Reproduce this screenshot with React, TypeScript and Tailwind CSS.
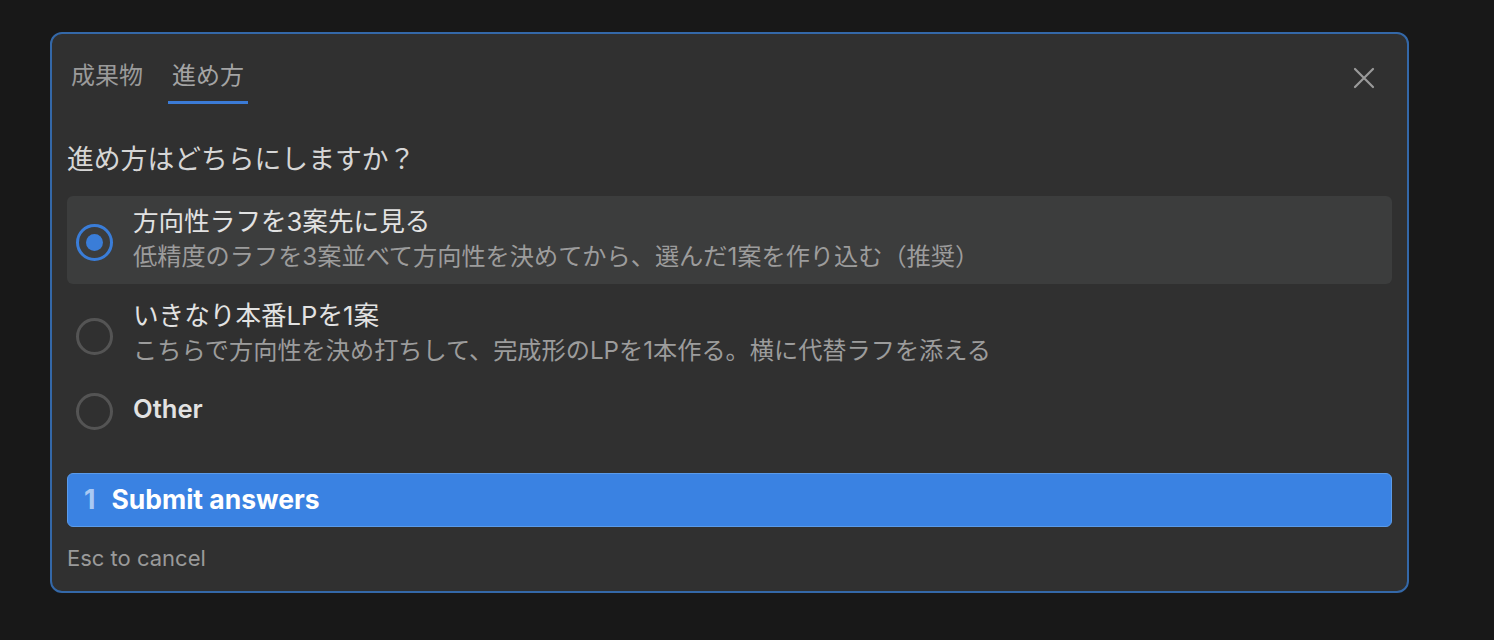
import { useState } from 'react'

const font = { fontFamily: '"Inter", "Noto Sans CJK JP", sans-serif' }

const options = [
    {
        id: 'rough',
        title: '方向性ラフを3案先に見る',
        desc: '低精度のラフを3案並べて方向性を決めてから、選んだ1案を作り込む（推奨）'
    },
    {
        id: 'direct',
        title: 'いきなり本番LPを1案',
        desc: 'こちらで方向性を決め打ちして、完成形のLPを1本作る。横に代替ラフを添える'
    },
    { id: 'other', title: 'Other', desc: '' }
]

function Radio({ checked }: { checked: boolean }) {
    return (
        <span
            className={`mt-[5px] flex h-[37px] w-[37px] flex-shrink-0 items-center justify-center rounded-full border-[3px] ${checked ? 'border-[#3a7dd8]' : 'border-[#545454]'
                }`}
        >
            {checked && <span className="h-[17px] w-[17px] rounded-full bg-[#3a7dd8]" />}
        </span>
    )
}

export default function App() {
    const [tab, setTab] = useState(1)
    const [selected, setSelected] = useState('rough')

    return (
        <div className="min-h-[640px] bg-[#181818] pt-[32px] pl-[50px]" style={font}>
            <div className="w-[1359px] rounded-[12px] border-2 border-[#3468a8] bg-[#303030] px-[15px] pt-[22px] pb-[18px]">
                {/* tabs */}
                <div className="flex items-start justify-between">
                    <div className="flex gap-[21px]">
                        {['成果物', '進め方'].map((t, i) => (
                            <button
                                key={t}
                                onClick={() => setTab(i)}
                                className={`px-[4px] pb-[5px] text-[24px] leading-[40px] border-b-[3px] ${tab === i
                                        ? 'border-[#3b7bd6] text-[#a4a4a4]'
                                        : 'border-transparent text-[#9a9a9a]'
                                    }`}
                            >
                                {t}
                            </button>
                        ))}
                    </div>
                    <button className="mt-[11px] mr-[17px] text-[#9a9a9a]">
                        <svg width="22" height="22" viewBox="0 0 22 22" fill="none" stroke="currentColor" strokeWidth="2.2" strokeLinecap="round">
                            <path d="M2 2L20 20M20 2L2 20" />
                        </svg>
                    </button>
                </div>

                <p className="mt-[35px] text-[26.8px] leading-[40px] text-[#d6d6d6]">進め方はどちらにしますか？</p>

                <div className="mt-[17px] flex flex-col gap-[6px]">
                    {options.map((o) => (
                        <button
                            key={o.id}
                            onClick={() => setSelected(o.id)}
                            className={`flex items-center gap-[20px] rounded-[6px] px-[9px] text-left ${o.desc ? 'py-[9px]' : 'py-[4px]'} ${selected === o.id ? 'bg-[#3c3d3d]' : ''
                                }`}
                        >
                            <Radio checked={selected === o.id} />
                            <div>
                                <p className={`text-[25.6px] leading-[34px] text-[#e2e2e2] ${o.desc ? '' : 'font-semibold'}`}>{o.title}</p>
                                {o.desc && <p className="text-[24.2px] leading-[36px] text-[#9c9c9c]">{o.desc}</p>}
                            </div>
                        </button>
                    ))}
                </div>

                <button className="mt-[39px] flex h-[54px] w-full items-center gap-[16px] rounded-[6px] border border-[#5b9be9] bg-[#3a82e2] px-[16px] text-[26.5px] font-bold">
                    <span className="text-[#a9c9f3]">1</span>
                    <span className="text-white">Submit answers</span>
                </button>

                <p className="mt-[16px] text-[22px] leading-[30px] text-[#9a9a9a]">Esc to cancel</p>
            </div>
        </div>
    )
}
